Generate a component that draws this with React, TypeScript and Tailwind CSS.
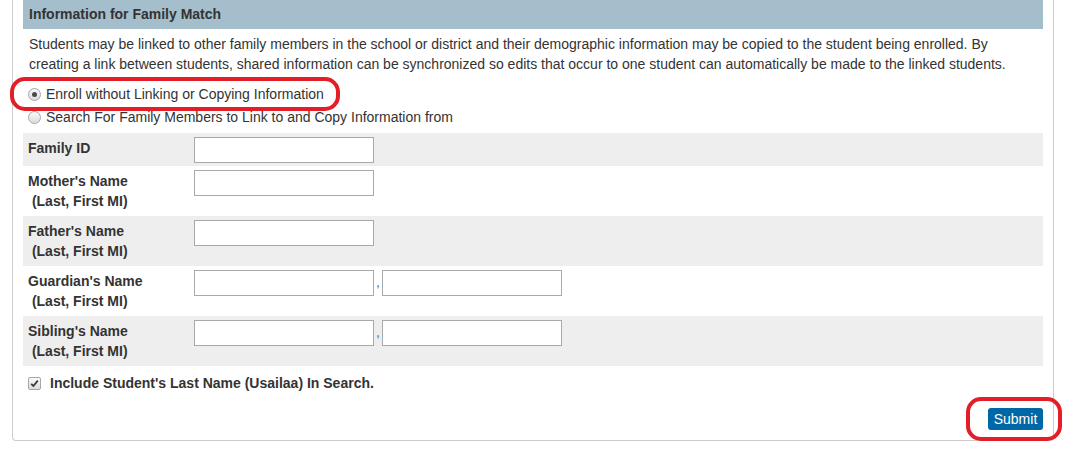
import React from 'react';

/**
 * Family Match panel
 */

const font = { fontFamily: '"Liberation Sans", Arial, sans-serif' };

const Radio = ({ checked = false }: { checked?: boolean }) => (
  <span className="inline-flex h-[13px] w-[13px] items-center justify-center rounded-full border border-[#a6a6a6] bg-gradient-to-b from-[#fafafa] to-[#dcdcdc]">
    {checked && <span className="h-[5px] w-[5px] rounded-full bg-[#4a4a4a]" />}
  </span>
);

const CheckBox = () => (
  <span className="inline-flex h-[13px] w-[13px] items-center justify-center rounded-[2px] border border-[#a6a6a6] bg-gradient-to-b from-[#fafafa] to-[#dcdcdc]">
    <svg width="9" height="9" viewBox="0 0 9 9">
      <path d="M1.2 4.8 L3.4 7 L7.8 1.6" fill="none" stroke="#3a3a3a" strokeWidth="1.8" />
    </svg>
  </span>
);

const TextBox = () => (
  <input type="text" className="h-[26px] w-[180px] border border-[#a9a9a9] bg-white outline-none" />
);

interface RowProps {
  label: string;
  twoLine?: boolean;
  pair?: boolean;
  gray?: boolean;
}

const FormRow = ({ label, twoLine = true, pair = false, gray = false }: RowProps) => (
  <div className={`flex items-start pl-[5px] pt-[4px] ${twoLine ? 'h-[50px]' : 'h-[33px]'} ${gray ? 'bg-[#eeeeee]' : 'bg-white'}`}>
    <div className="w-[166px] pt-[1px] text-[14px] font-bold leading-[20px] text-[#333333]">
      {label}
      {twoLine && (
        <>
          <br />
          {'\u00a0(Last, First MI)'}
        </>
      )}
    </div>
    <TextBox />
    {pair && (
      <>
        <span className="w-[8px] pt-[9px] text-center text-[10px] font-bold leading-[10px] text-[#3f7fcf]">,</span>
        <TextBox />
      </>
    )}
  </div>
);

export default function App() {
  return (
    <div className="relative h-[454px] w-[1066px] overflow-hidden bg-white text-[#333333]" style={font}>
      <div className="ml-[12px] w-[1042px] rounded-b-[4px] border-x border-b border-[#cccccc] px-[10px] pb-[10px]">
        {/* ヘッダー */}
        <div className="flex h-[29px] items-center bg-[#a4bfcb] pl-[6px] text-[14px] font-bold">
          Information for Family Match
        </div>

        <p className="mt-[5px] pl-[6px] text-[14px] leading-[20px]">
          Students may be linked to other family members in the school or district and their demographic information may be copied to the student being enrolled. By
          <br />
          creating a link between students, shared information can be synchronized so edits that occur to one student can automatically be made to the linked students.
        </p>

        {/* 選択肢 */}
        <div className="mt-[10px] flex h-[20px] items-center pl-[5px] text-[14px]">
          <Radio checked />
          <span className="ml-[5px]">Enroll without Linking or Copying Information</span>
        </div>
        <div className="mt-[3px] flex h-[20px] items-center pl-[5px] text-[14px]">
          <Radio />
          <span className="ml-[5px]">Search For Family Members to Link to and Copy Information from</span>
        </div>

        <div className="mt-[6px]">
          <FormRow label="Family ID" twoLine={false} gray />
          <FormRow label="Mother's Name" />
          <FormRow label="Father's Name" gray />
          <FormRow label="Guardian's Name" pair />
          <FormRow label="Sibling's Name" pair gray />
        </div>

        <div className="mt-[7px] flex h-[20px] items-center pl-[5px]">
          <CheckBox />
          <span className="ml-[9px] text-[14px] font-bold">Include Student's Last Name (Usailaa) In Search.</span>
        </div>

        <div className="mt-[15px] flex justify-end">
          <button className="h-[22px] w-[55px] rounded-[3px] bg-[#0067a7] text-[14px] leading-[22px] text-white">
            Submit
          </button>
        </div>
      </div>

      {/* 注釈の赤枠 */}
      <div className="absolute left-[10px] top-[77px] h-[34px] w-[330px] rounded-[15px] border-[4px] border-[#e41e26]" />
      <div className="absolute left-[966px] top-[397px] h-[44px] w-[96px] rounded-[15px] border-[4px] border-[#e41e26]" />
    </div>
  );
}
